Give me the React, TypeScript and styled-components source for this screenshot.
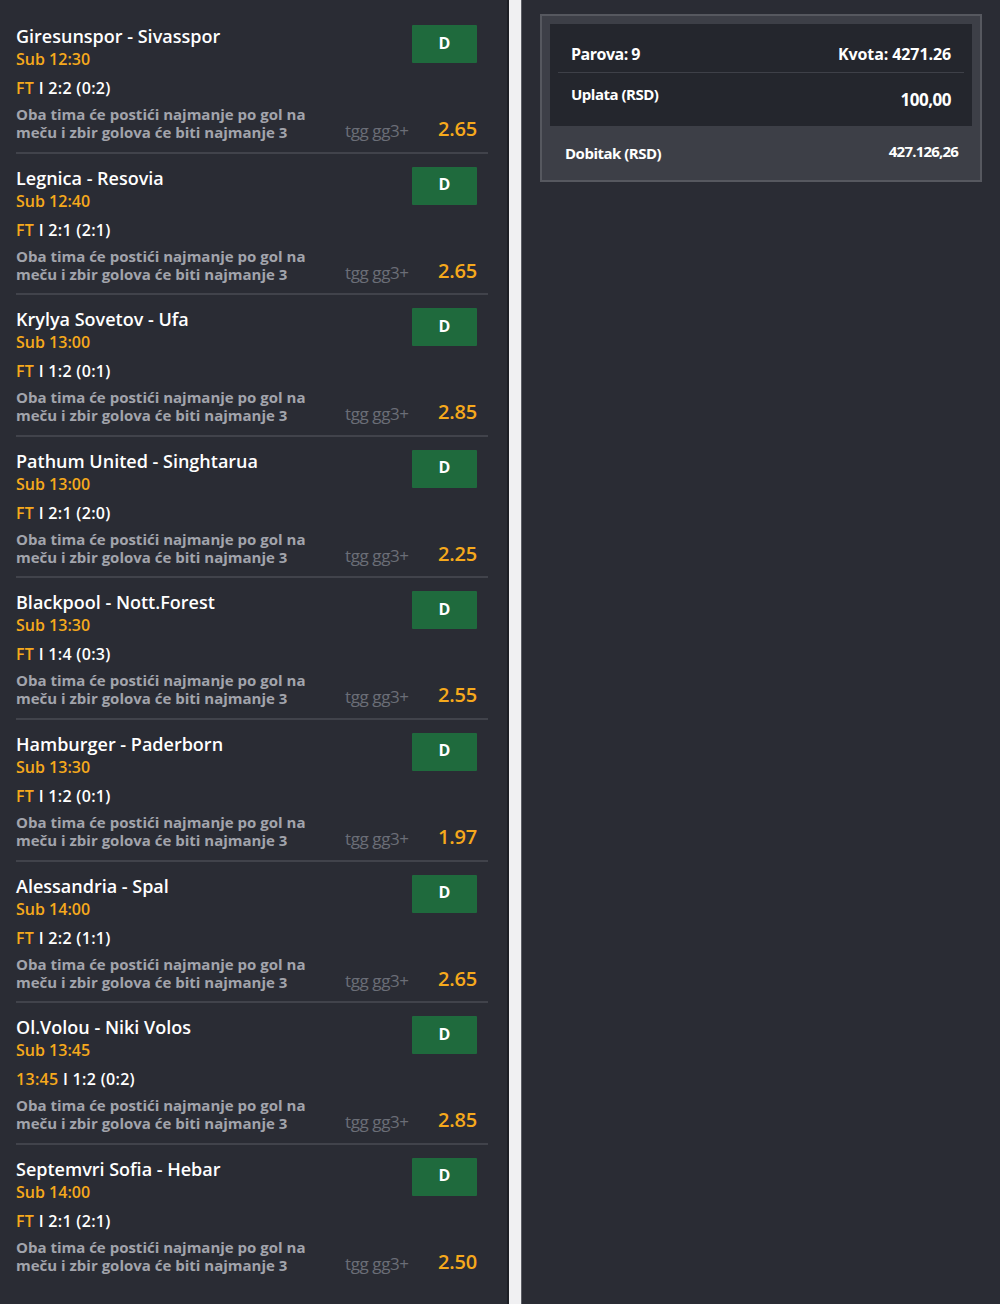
import React from "react";
import styled, { createGlobalStyle } from "styled-components";

const GlobalStyle = createGlobalStyle`
  html, body {
    margin: 0;
    padding: 0;
    background: #2a2c34;
  }
  body {
    font-family: "Open Sans", "Liberation Sans", sans-serif;
    -webkit-font-smoothing: antialiased;
  }
`;

const Page = styled.div`
  display: flex;
  width: 1000px;
  height: 1304px;
  overflow: hidden;
  background: #2a2c34;
`;

const Matches = styled.ul`
  width: 507px;
  margin: 0;
  padding: 12px 0 0;
  list-style: none;
  box-sizing: border-box;
`;

const Divider = styled.div`
  width: 12px;
  background: #f0f0f2;
  border-left: 2px solid #1d1f25;
  border-right: 1px solid #5b5d64;
`;

const Side = styled.div`
  flex: 1;
  padding: 14px 18px 0;
`;

const Match = styled.li<{ $last?: boolean }>`
  margin-left: 16px;
  width: 472px;
  box-sizing: border-box;
  padding: 13px 11px 10.6px 0;
  border-bottom: ${(p) => (p.$last ? "none" : "2px solid #41434b")};
`;

const Top = styled.div`
  display: flex;
  justify-content: space-between;
  align-items: flex-start;
`;

const Teams = styled.div`
  color: #ffffff;
  font-size: 18px;
  font-weight: 600;
  line-height: 22px;
`;

const Kickoff = styled.div`
  margin-top: 1px;
  color: #f6a91c;
  font-size: 16px;
  font-weight: 600;
  line-height: 22px;
`;

const Tip = styled.button`
  width: 65px;
  height: 38px;
  border: none;
  border-radius: 1px;
  background: #1f6a3d;
  color: #ffffff;
  font-family: inherit;
  font-size: 16px;
  font-weight: 700;
  padding: 0 0 3px;
`;

const Result = styled.div`
  margin-top: 7px;
  color: #ffffff;
  font-size: 16px;
  font-weight: 600;
  line-height: 22px;
  letter-spacing: 0.3px;
`;

const Status = styled.span`
  color: #f6a91c;
`;

const Bottom = styled.div`
  margin-top: 6px;
  display: flex;
  align-items: flex-end;
`;

const Market = styled.div`
  width: 329px;
  color: #a2a4ac;
  font-size: 15px;
  font-weight: 700;
  line-height: 18px;
  white-space: nowrap;
`;

const Code = styled.span`
  width: 72px;
  color: #6b6e77;
  font-size: 17px;
  font-weight: 400;
  line-height: 20px;
  letter-spacing: -0.4px;
`;

const Odd = styled.span`
  flex: 1;
  text-align: right;
  color: #f6a91c;
  font-size: 20px;
  font-weight: 600;
  line-height: 24px;
  letter-spacing: -0.2px;
`;

const Slip = styled.div`
  border: 2px solid #56585f;
  background: #3d3f47;
  padding: 8px 8px 0;
  color: #ffffff;
  font-weight: 700;
  letter-spacing: -0.5px;
`;

const Summary = styled.div`
  background: #24262d;
  padding: 0 8px;
  height: 102px;
`;

const Line = styled.div`
  display: flex;
  justify-content: space-between;
  align-items: flex-start;
  padding: 0 13px;
  font-size: 16px;
  line-height: 20px;
`;

const CountLine = styled(Line)`
  padding-top: 20px;
  padding-bottom: 8px;
  border-bottom: 1px solid #3e4048;
`;

const Odds = styled.span`
  letter-spacing: -0.1px;
`;

const StakeLine = styled(Line)`
  padding-top: 11px;
  font-size: 15px;
`;

const StakeValue = styled.span`
  margin-top: 6px;
  font-size: 17px;
`;

const Win = styled.div`
  height: 54px;
  display: flex;
  justify-content: space-between;
  align-items: center;
  padding: 0 14px 0 15px;
  font-size: 15px;
`;

const WinValue = styled.span`
  margin-top: -4px;
  font-size: 15px;
  letter-spacing: -0.8px;
`;

type Row = {
  teams: string;
  kickoff: string;
  status: string;
  score: string;
  odd: string;
};

const rows: Row[] = [
  { teams: "Giresunspor - Sivasspor", kickoff: "Sub 12:30", status: "FT", score: "2:2 (0:2)", odd: "2.65" },
  { teams: "Legnica - Resovia", kickoff: "Sub 12:40", status: "FT", score: "2:1 (2:1)", odd: "2.65" },
  { teams: "Krylya Sovetov - Ufa", kickoff: "Sub 13:00", status: "FT", score: "1:2 (0:1)", odd: "2.85" },
  { teams: "Pathum United - Singhtarua", kickoff: "Sub 13:00", status: "FT", score: "2:1 (2:0)", odd: "2.25" },
  { teams: "Blackpool - Nott.Forest", kickoff: "Sub 13:30", status: "FT", score: "1:4 (0:3)", odd: "2.55" },
  { teams: "Hamburger - Paderborn", kickoff: "Sub 13:30", status: "FT", score: "1:2 (0:1)", odd: "1.97" },
  { teams: "Alessandria - Spal", kickoff: "Sub 14:00", status: "FT", score: "2:2 (1:1)", odd: "2.65" },
  { teams: "Ol.Volou - Niki Volos", kickoff: "Sub 13:45", status: "13:45", score: "1:2 (0:2)", odd: "2.85" },
  { teams: "Septemvri Sofia - Hebar", kickoff: "Sub 14:00", status: "FT", score: "2:1 (2:1)", odd: "2.50" },
];

const App: React.FC = () => {
  return (
    <Page>
      <GlobalStyle />
      <Matches>
        {rows.map((r, i) => (
          <Match key={r.teams} $last={i === rows.length - 1}>
            <Top>
              <div>
                <Teams>{r.teams}</Teams>
                <Kickoff>{r.kickoff}</Kickoff>
              </div>
              <Tip>D</Tip>
            </Top>
            <Result>
              <Status>{r.status}</Status> I {r.score}
            </Result>
            <Bottom>
              <Market>
                Oba tima će postići najmanje po gol na
                <br />
                meču i zbir golova će biti najmanje 3
              </Market>
              <Code>tgg gg3+</Code>
              <Odd>{r.odd}</Odd>
            </Bottom>
          </Match>
        ))}
      </Matches>
      <Divider />
      <Side>
        <Slip>
          <Summary>
            <CountLine>
              <span>Parova: 9</span>
              <Odds>Kvota: 4271.26</Odds>
            </CountLine>
            <StakeLine>
              <span>Uplata (RSD)</span>
              <StakeValue>100,00</StakeValue>
            </StakeLine>
          </Summary>
          <Win>
            <span>Dobitak (RSD)</span>
            <WinValue>427.126,26</WinValue>
          </Win>
        </Slip>
      </Side>
    </Page>
  );
};

export default App;
